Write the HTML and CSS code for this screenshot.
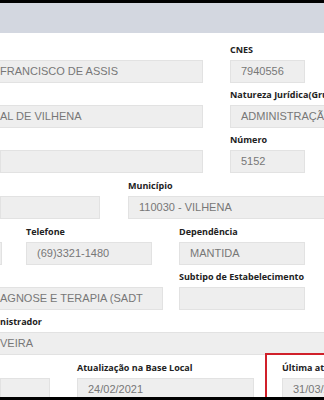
FILE: index.html
```html
<!DOCTYPE html>
<html>
<head>
  <title>Dados do Estabelecimento</title>
  <link rel="stylesheet" href="styles.css">
</head>
<body>
  <div class="screen">
    <div class="header"></div>

    <div class="form">
      <div class="row">
        <div class="field w-203">
          <div class="value cut">FRANCISCO DE ASSIS</div>
        </div>
        <div class="field w-75 gap-27">
          <label>CNES</label>
          <div class="value">7940556</div>
        </div>
      </div>

      <div class="row">
        <div class="field w-203">
          <div class="value cut">AL DE VILHENA</div>
        </div>
        <div class="field grow gap-27">
          <label>Natureza Jurídica(Grupo)</label>
          <div class="value">ADMINISTRAÇÃO PÚBLICA</div>
        </div>
      </div>

      <div class="row">
        <div class="field w-203">
          <div class="value"></div>
        </div>
        <div class="field w-75 gap-27">
          <label>Número</label>
          <div class="value">5152</div>
        </div>
      </div>

      <div class="row loose">
        <div class="field w-100">
          <div class="value"></div>
        </div>
        <div class="field grow gap-28">
          <label>Município</label>
          <div class="value">110030 - VILHENA</div>
        </div>
      </div>

      <div class="row loose">
        <div class="field w-2">
          <div class="value cut"></div>
        </div>
        <div class="field w-126 gap-24">
          <label>Telefone</label>
          <div class="value">(69)3321-1480</div>
        </div>
        <div class="field w-126 gap-27">
          <label>Dependência</label>
          <div class="value">MANTIDA</div>
        </div>
      </div>

      <div class="row">
        <div class="field w-163">
          <div class="value cut">AGNOSE E TERAPIA (SADT</div>
        </div>
        <div class="field w-126 gap-16">
          <label>Subtipo de Estabelecimento</label>
          <div class="value"></div>
        </div>
      </div>

      <div class="row">
        <div class="field grow">
          <label class="cut">nistrador</label>
          <div class="value cut">VEIRA</div>
        </div>
      </div>

      <div class="row loose">
        <div class="field w-50">
          <div class="value"></div>
        </div>
        <div class="field w-177 gap-27">
          <label>Atualização na Base Local</label>
          <div class="value">24/02/2021</div>
        </div>
        <div class="field grow gap-28">
          <label>Última atualização Nacional</label>
          <div class="value">31/03/2021</div>
        </div>
      </div>
    </div>

    <div class="highlight"></div>
  </div>
</body>
</html>
```

FILE: styles.css
```css
body {
  margin: 0;
  padding: 3px 0 0;
  background-color: #000;
  font-family: "Liberation Sans", Arial, sans-serif;
}

.screen {
  position: relative;
  height: 394px;
  overflow: hidden;
  background-color: #fff;
}

.header {
  height: 30px;
  background-color: #d3d7e0;
}

.form {
  padding-top: 10px;
  width: 360px;
}

.row {
  display: flex;
  align-items: flex-end;
}

.row + .row {
  margin-top: 5px;
}

.row.loose {
  margin-top: 6px;
}

.field {
  flex: none;
  display: flex;
  flex-direction: column;
}

.field.grow {
  flex: 1;
}

.field label {
  display: block;
  height: 13px;
  line-height: 13px;
  margin-bottom: 4px;
  font-family: "Open Sans", sans-serif;
  font-size: 9px;
  font-weight: bold;
  color: #222;
  white-space: nowrap;
}

.value {
  box-sizing: border-box;
  height: 23px;
  line-height: 21px;
  padding-left: 10px;
  border: 1px solid #e2e2e2;
  background-color: #eeeeee;
  font-size: 11px;
  color: #777;
  white-space: nowrap;
  overflow: hidden;
}

.value.cut {
  padding-left: 0;
  border-left: none;
}

.w-2 { width: 2px; }
.w-50 { width: 50px; }
.w-75 { width: 75px; }
.w-100 { width: 100px; }
.w-126 { width: 126px; }
.w-163 { width: 163px; }
.w-177 { width: 177px; }
.w-203 { width: 203px; }

.gap-16 { margin-left: 16px; }
.gap-24 { margin-left: 24px; }
.gap-27 { margin-left: 27px; }
.gap-28 { margin-left: 28px; }

.highlight {
  position: absolute;
  left: 265px;
  top: 350px;
  width: 80px;
  height: 80px;
  border: 2px solid #d0202a;
}
```
